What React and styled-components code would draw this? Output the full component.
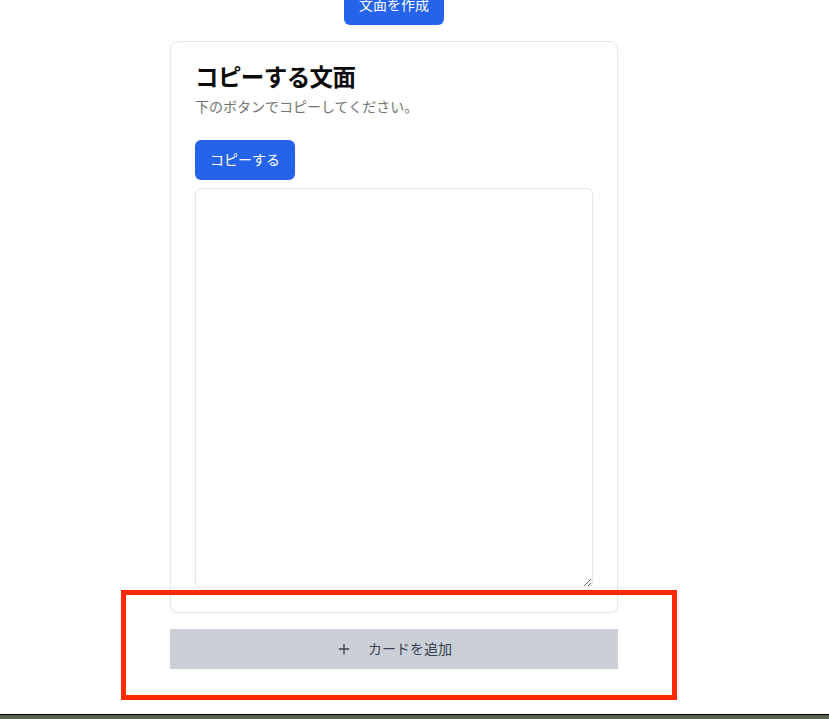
import React from "react";
import styled, { createGlobalStyle } from "styled-components";
import { Plus } from "lucide-react";

const GlobalStyle = createGlobalStyle`
  html, body { margin: 0; padding: 0; background: #ffffff; }
  body {
    font-family: Inter, "Noto Sans CJK JP", "Noto Sans", sans-serif;
    color: #0a0a0a;
    -webkit-font-smoothing: antialiased;
  }
  * { box-sizing: border-box; }
`;

const Screen = styled.div`
  position: relative;
  height: 100vh;
  display: flex;
  flex-direction: column;
  overflow: hidden;
`;

const Viewport = styled.main`
  flex: 1;
  overflow: hidden;
`;

const Column = styled.div`
  width: 448px;
  margin: -15px 0 0 170px;
  display: flex;
  flex-direction: column;
  align-items: center;
  gap: 16px;
`;

const PrimaryButton = styled.button`
  height: 40px;
  padding: 0 15px;
  border: none;
  border-radius: 6px;
  background: #2563eb;
  color: #ffffff;
  font-family: inherit;
  font-size: 14px;
  font-weight: 400;
  line-height: 20px;
  cursor: pointer;
  align-self: ${(p) => (p.$start ? "flex-start" : "center")};
`;

const Card = styled.section`
  width: 100%;
  border: 1px solid #e5e7eb;
  border-radius: 8px;
  background: #ffffff;
  box-shadow: 0 1px 2px rgba(0, 0, 0, 0.03);
`;

const CardHeader = styled.header`
  display: flex;
  flex-direction: column;
  gap: 7px;
  padding: 24px;
`;

const CardTitle = styled.h2`
  margin: 0;
  font-size: 23.5px;
  line-height: 24px;
  font-weight: 700;
  letter-spacing: -0.025em;
  color: #0a0a0a;
`;

const CardDescription = styled.p`
  margin: 0 0 -1px;
  font-size: 14px;
  line-height: 20px;
  color: #737373;
`;

const CardContent = styled.div`
  display: flex;
  flex-direction: column;
  gap: 8px;
  padding: 0 24px 24px;
`;

const TextArea = styled.textarea`
  display: block;
  width: 100%;
  height: 400px;
  border: 1px solid #e5e7eb;
  border-radius: 6px;
  padding: 8px 12px;
  font-family: inherit;
  font-size: 14px;
  background: #ffffff;
  outline: none;
`;

const AddCardButton = styled.button`
  width: 100%;
  height: 40px;
  border: none;
  background: #cbd0d7;
  color: #374151;
  display: flex;
  align-items: center;
  justify-content: center;
  gap: 16px;
  font-family: inherit;
  font-size: 14px;
  line-height: 20px;
  cursor: pointer;
`;

const Highlight = styled.div`
  position: absolute;
  left: 121px;
  top: 590px;
  width: 556px;
  height: 110px;
  border: 5px solid #ff2a00;
  pointer-events: none;
`;

const BottomStrip = styled.div`
  height: 5px;
  flex-shrink: 0;
  border-top: 1px solid #000000;
  background: #56644f;
`;

export default function App() {
  return (
    <>
      <GlobalStyle />
      <Screen>
        <Viewport>
          <Column>
            <PrimaryButton>文面を作成</PrimaryButton>
            <Card>
              <CardHeader>
                <CardTitle>コピーする文面</CardTitle>
                <CardDescription>下のボタンでコピーしてください。</CardDescription>
              </CardHeader>
              <CardContent>
                <PrimaryButton $start>コピーする</PrimaryButton>
                <TextArea readOnly />
              </CardContent>
            </Card>
            <AddCardButton>
              <Plus size={16} strokeWidth={2} />
              <span>カードを追加</span>
            </AddCardButton>
          </Column>
        </Viewport>
        <Highlight />
        <BottomStrip />
      </Screen>
    </>
  );
}
